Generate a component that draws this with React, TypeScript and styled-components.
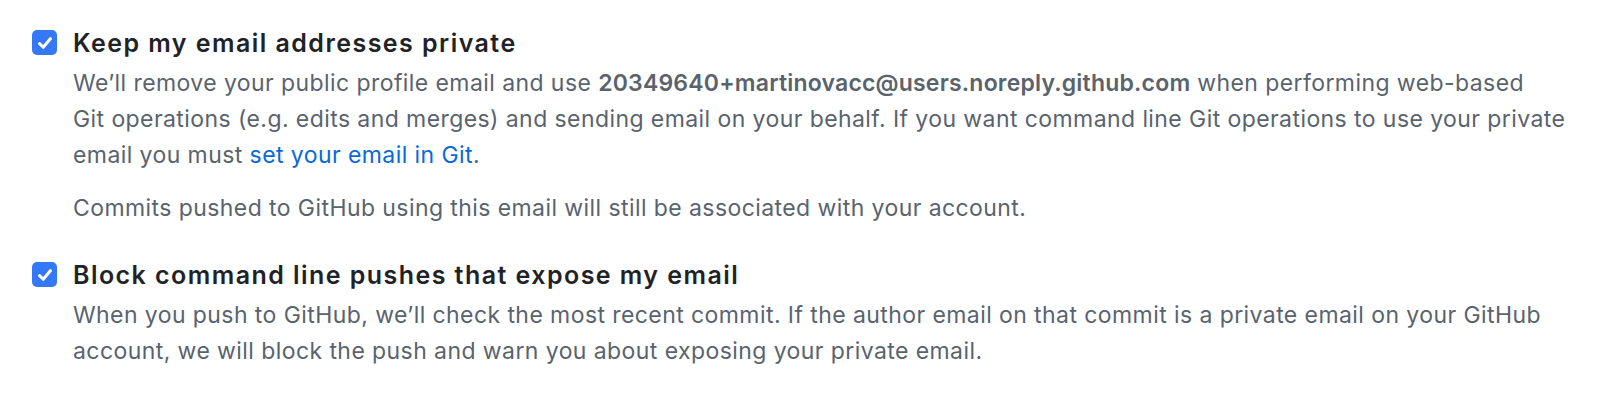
import React from "react";
import styled, { createGlobalStyle } from "styled-components";

const GlobalStyle = createGlobalStyle`
  html, body {
    margin: 0;
    padding: 0;
    background: #ffffff;
  }
  body {
    font-family: Inter, "Noto Sans", "Liberation Sans", sans-serif;
    -webkit-font-smoothing: antialiased;
  }
`;

const Page = styled.div`
  display: flex;
  flex-direction: column;
  gap: 34px;
  padding: 28px 0 0 32px;
  width: 1600px;
  box-sizing: border-box;
`;

const Option = styled.div`
  display: grid;
  grid-template-columns: 25px 1fr;
  column-gap: 16px;
  align-items: start;
`;

const Box = styled.span`
  width: 25px;
  height: 25px;
  margin-top: 2px;
  border-radius: 5px;
  background: #3478f6;
  display: flex;
  align-items: center;
  justify-content: center;
`;

const Content = styled.div`
  display: flex;
  flex-direction: column;
  min-width: 0;
`;

const Title = styled.label`
  font-size: 25px;
  line-height: 30px;
  font-weight: 600;
  letter-spacing: 1.45px;
  color: #1f2328;
  margin-bottom: 7px;
  white-space: nowrap;
`;

const Note = styled.p`
  margin: 0;
  font-size: 23px;
  line-height: 36px;
  letter-spacing: 0.42px;
  color: #59636e;
  white-space: nowrap;
  & + & {
    margin-top: 17px;
  }
`;

const Strong = styled.strong`
  font-weight: 600;
  letter-spacing: 0.2px;
`;

const Link = styled.a`
  color: #0969da;
  text-decoration: none;
`;

const Check = () => (
  <Box>
    <svg width="18" height="18" viewBox="0 0 16 16" fill="none">
      <path
        d="M3.2 8.6 L6.4 11.8 L12.8 4.2"
        stroke="#ffffff"
        strokeWidth="2.7"
        strokeLinecap="round"
        strokeLinejoin="round"
      />
    </svg>
  </Box>
);

export default function App() {
  return (
    <>
      <GlobalStyle />
      <Page>
        <Option>
          <Check />
          <Content>
            <Title>Keep my email addresses private</Title>
            <Note>
              We’ll remove your public profile email and use{" "}
              <Strong>20349640+martinovacc@users.noreply.github.com</Strong> when performing web-based
              <br />
              Git operations (e.g. edits and merges) and sending email on your behalf. If you want command line Git
              operations to use your private
              <br />
              email you must <Link href="#">set your email in Git</Link>.
            </Note>
            <Note>Commits pushed to GitHub using this email will still be associated with your account.</Note>
          </Content>
        </Option>
        <Option>
          <Check />
          <Content>
            <Title>Block command line pushes that expose my email</Title>
            <Note>
              When you push to GitHub, we’ll check the most recent commit. If the author email on that commit is a
              private email on your GitHub
              <br />
              account, we will block the push and warn you about exposing your private email.
            </Note>
          </Content>
        </Option>
      </Page>
    </>
  );
}
